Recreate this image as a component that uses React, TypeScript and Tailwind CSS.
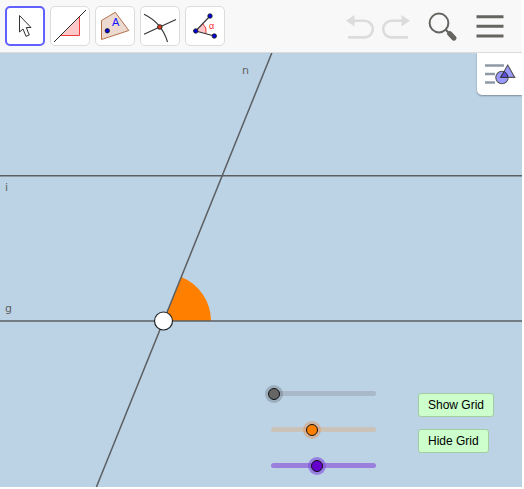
import { useState } from "react";
import type { ReactNode } from "react";

const MoveIcon = () => (
    <svg viewBox="0 0 40 40" className="w-10 h-10 shrink-0">
        <path d="M14.5 9.5V26L18 23L21 30.3L24.3 29L21.3 21.5H26Z" fill="#fff" stroke="#333" strokeWidth="1" />
    </svg>
);

const LineIcon = () => (
    <svg viewBox="0 0 40 40" className="w-10 h-10 shrink-0">
        <path d="M11 29.5H29.5V11Z" fill="#ffc8c8" />
        <path d="M11 29.5H29.5V11" fill="none" stroke="#f03c3c" strokeWidth="1" />
        <path d="M4 36L36 4" stroke="#111" strokeWidth="0.9" />
    </svg>
);

const PolygonIcon = () => (
    <svg viewBox="0 0 40 40" className="w-10 h-10 shrink-0">
        <path d="M6.5 14.5L20.3 6.3L33.8 24.5L6.5 33.5Z" fill="#ecd9cf" stroke="#b5714c" strokeWidth="1" />
        <circle cx="12.3" cy="24.8" r="2.2" fill="#0000e0" stroke="#222" strokeWidth="0.9" />
        <text x="17" y="20" fontSize="11" fill="#1414ff" fontFamily="Liberation Sans, Arial, sans-serif">A</text>
    </svg>
);

const IntersectIcon = () => (
    <svg viewBox="0 0 40 40" className="w-10 h-10 shrink-0">
        <path d="M4 8.3Q22 17 27.5 36M4 28.3L36 13.5" fill="none" stroke="#333" strokeWidth="1.1" />
        <circle cx="19.8" cy="21" r="2.3" fill="#d83a20" stroke="#222" strokeWidth="0.9" />
    </svg>
);

const AngleIcon = () => (
    <svg viewBox="0 0 40 40" className="w-10 h-10 shrink-0">
        <path d="M10.7 25L17.7 17.6A10.3 10.3 0 0 1 21 27.4Z" fill="#ffc8c8" />
        <path d="M17.7 17.6A10.3 10.3 0 0 1 21 27.4" fill="none" stroke="#f03c3c" />
        <path d="M25 10L10.7 25L29.3 30" fill="none" stroke="#333" strokeWidth="1.1" />
        <circle cx="10.7" cy="25" r="2.2" fill="#0000e0" stroke="#222" strokeWidth="0.9" />
        <circle cx="25" cy="10" r="2.2" fill="#0000e0" stroke="#222" strokeWidth="0.9" />
        <circle cx="29.3" cy="30" r="2.2" fill="#0000e0" stroke="#222" strokeWidth="0.9" />
        <text x="24" y="23" fontSize="9" fill="#ff2828" fontFamily="Liberation Sans, Arial, sans-serif">α</text>
    </svg>
);

const UndoIcon = () => (
    <svg viewBox="0 0 28 26" className="w-7 h-[26px]">
        <path d="M0 7.8L8.5 2V13.5Z" fill="#dcdcdc" />
        <path d="M7 7.8H18.5A8.3 8.3 0 0 1 18.5 24.4H2" fill="none" stroke="#dcdcdc" strokeWidth="2.6" />
    </svg>
);

const SearchIcon = () => (
    <svg viewBox="0 0 30 30" className="w-[30px] h-[30px]">
        <circle cx="11" cy="12" r="9.4" fill="none" stroke="#666460" strokeWidth="2" />
        <path d="M17.5 18.5L21 22" stroke="#666460" strokeWidth="2.2" />
        <path d="M21.8 22.8L25.8 27" stroke="#666460" strokeWidth="5.2" strokeLinecap="round" />
    </svg>
);

const MenuIcon = () => (
    <svg viewBox="0 0 28 24" className="w-7 h-6">
        <path d="M0.5 2.7H27.5M0.5 12.3H27.5M0.5 22H27.5" stroke="#666460" strokeWidth="3" />
    </svg>
);

const StyleBarIcon = () => (
    <svg viewBox="0 0 32 22" className="w-8 h-[22px]">
        <path d="M0 2.5H19M0 11H10M0 19.5H10" stroke="#8e9aa6" strokeWidth="2.4" />
        <circle cx="17" cy="14.5" r="7.6" fill="#fff" />
        <path d="M22.5 0L31.5 15.5H14Z" fill="#fff" />
        <circle cx="17" cy="14.5" r="6.2" fill="#9999ff" stroke="#555" strokeWidth="1.1" />
        <path d="M22.7 2L29.8 14.4H15.6Z" fill="#8080ff" fillOpacity="0.8" stroke="#555" strokeWidth="1.1" />
        <path d="M15.6 14.4L19.3 8.4Q22.5 10.5 23 14.4Z" fill="#5a50d8" stroke="#333" />
    </svg>
);

const tools: { name: string; icon: ReactNode }[] = [
    { name: 'Move', icon: <MoveIcon /> },
    { name: 'Line', icon: <LineIcon /> },
    { name: 'Polygon', icon: <PolygonIcon /> },
    { name: 'Intersect', icon: <IntersectIcon /> },
    { name: 'Angle', icon: <AngleIcon /> },
];

const sliders = [
    {
        name: 'Position',
        value: 0,
        track: 'bg-[#a9b9c9]',
        thumb: '[&::-webkit-slider-thumb]:bg-[#666666] [&::-webkit-slider-thumb]:shadow-[0_0_0_3px_rgba(96,102,112,0.35)]',
    },
    {
        name: 'Angle size',
        value: 38,
        track: 'bg-[#cbc2ba]',
        thumb: '[&::-webkit-slider-thumb]:bg-[#ff8000] [&::-webkit-slider-thumb]:shadow-[0_0_0_3px_rgba(225,145,85,0.45)]',
    },
    {
        name: 'Rotation',
        value: 43,
        track: 'bg-[#9b7fdd]',
        thumb: '[&::-webkit-slider-thumb]:bg-[#6600cc] [&::-webkit-slider-thumb]:shadow-[0_0_0_3px_rgba(125,75,220,0.6)]',
    },
];

const Slider = ({ name, value, track, thumb }: { name: string; value: number; track: string; thumb: string }) => {
    const [current, setCurrent] = useState(value);

    return (
        <div className={`flex items-center w-[105px] h-[5px] rounded-full ${track}`}>
            <input
                type="range"
                aria-label={name}
                min={0}
                max={100}
                value={current}
                onChange={(e) => setCurrent(Number(e.target.value))}
                className={`appearance-none shrink-0 w-[111px] h-[18px] -mx-[3px] bg-transparent focus:outline-none [&::-webkit-slider-thumb]:appearance-none [&::-webkit-slider-thumb]:w-3 [&::-webkit-slider-thumb]:h-3 [&::-webkit-slider-thumb]:rounded-full [&::-webkit-slider-thumb]:border [&::-webkit-slider-thumb]:border-[#111111] ${thumb}`}
            />
        </div>
    );
};

const Toolbar = () => {
    const [selected, setSelected] = useState('Move');

    return (
        <header className="flex items-start justify-between bg-[#f8f8f8] border-b border-[#dcdcdc] pl-[5px] pr-[18px] py-[6px]">
            <div className="flex gap-[5px]">
                {tools.map((tool) => (
                    <button
                        key={tool.name}
                        type="button"
                        aria-label={tool.name}
                        onClick={() => setSelected(tool.name)}
                        className={`flex items-center justify-center w-10 h-10 bg-white rounded-[5px] ${selected === tool.name ? 'border-2 border-[#6161ff]' : 'border border-[#dcdcdc]'}`}
                    >
                        {tool.icon}
                    </button>
                ))}
            </div>
            <div className="flex items-center h-10">
                <button type="button" aria-label="Undo" className="mr-2"><UndoIcon /></button>
                <button type="button" aria-label="Redo" className="mr-[18px] -scale-x-100"><UndoIcon /></button>
                <button type="button" aria-label="Search" className="mr-[18px]"><SearchIcon /></button>
                <button type="button" aria-label="Menu"><MenuIcon /></button>
            </div>
        </header>
    );
};

const GraphicsView = () => {
    const [showGrid, setShowGrid] = useState(false);

    return (
        <main className="relative flex-1 min-h-[434px] overflow-hidden bg-[#bcd3e6]">
            <svg className="absolute inset-0 w-full h-full">
                {showGrid && (
                    <>
                        <defs>
                            <pattern id="grid" width="40" height="40" patternUnits="userSpaceOnUse">
                                <path d="M40 0H0V40" fill="none" stroke="#a3b8ca" />
                            </pattern>
                        </defs>
                        <rect width="100%" height="100%" fill="url(#grid)" />
                    </>
                )}
                <path d="M163.5 268L181.3 224A47.5 47.5 0 0 1 211 268Z" fill="#ff8000" />
                <g stroke="#5c5f62" strokeWidth="1.5">
                    <line x1="0" y1="122.8" x2="100%" y2="122.8" />
                    <line x1="0" y1="268" x2="100%" y2="268" />
                    <line x1="271.8" y1="0" x2="96.4" y2="434" />
                </g>
                <circle cx="163.5" cy="268" r="9" fill="#fff" stroke="#222" strokeWidth="1.2" />
                <g fill="#616161" fontSize="11" fontFamily="DejaVu Sans, sans-serif">
                    <text x="242" y="21">n</text>
                    <text x="5" y="138">i</text>
                    <text x="5" y="259">g</text>
                </g>
            </svg>

            <button
                type="button"
                aria-label="Style bar"
                className="absolute top-0 right-0 flex items-center justify-center w-[45px] h-[42px] pl-[3px] bg-white rounded-bl-[5px] shadow-[0_1px_2px_rgba(0,0,0,0.35)]"
            >
                <StyleBarIcon />
            </button>

            <div className="absolute top-[338px] left-[271px] flex flex-col gap-[31px]">
                {sliders.map((slider) => (
                    <Slider key={slider.name} {...slider} />
                ))}
            </div>

            <div className="absolute top-[340px] left-[418px] flex flex-col items-start gap-3 font-['Liberation_Sans',Arial,sans-serif] text-xs text-black">
                <button type="button" onClick={() => setShowGrid(true)} className="h-6 px-[9px] bg-[#ccffcc] border border-[#a3cca3] rounded-[3px]">
                    Show Grid
                </button>
                <button type="button" onClick={() => setShowGrid(false)} className="h-6 px-[9px] bg-[#ccffcc] border border-[#a3cca3] rounded-[3px]">
                    Hide Grid
                </button>
            </div>
        </main>
    );
};

const App = () => {
    return (
        <div className="flex flex-col min-h-screen pr-[2px] pb-[2px] bg-white">
            <Toolbar />
            <GraphicsView />
        </div>
    );
};

export default App;
